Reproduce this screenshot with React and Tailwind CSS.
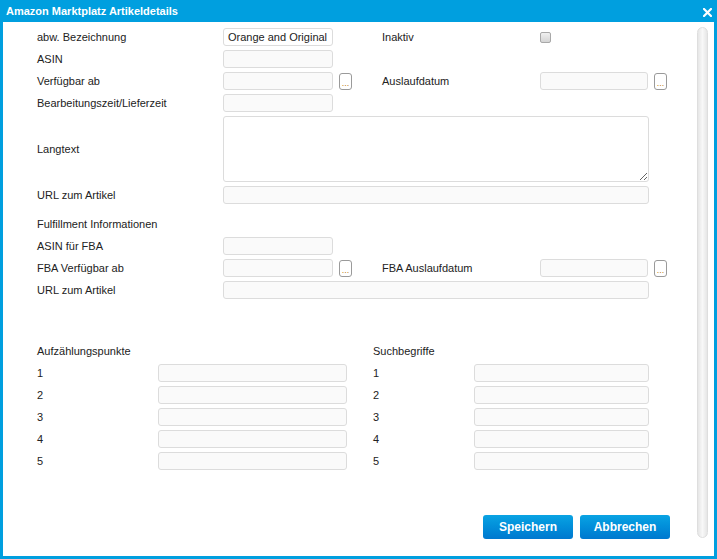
import React from 'react';

// Dialog "Amazon Marktplatz Artikeldetails": Formular mit festen Spalten.
const font = { fontFamily: '"Liberation Sans", Arial, sans-serif' };

function Field({ w, value, className = '' }) {
  return (
    <div
      className={`h-[18px] overflow-hidden whitespace-nowrap rounded-[3px] border border-[#dcdcdc] pl-[4px] text-[11px] leading-[16px] text-[#222] ${
        value ? 'bg-white' : 'bg-[#fafafa]'
      } ${className}`}
      style={{ width: w }}
    >
      {value}
    </div>
  );
}

function DotsButton() {
  return (
    <div className="ml-[6px] flex h-[17px] w-[13px] items-end justify-center rounded-[3px] border border-[#9a9a9a] bg-white pb-[1px] text-[9px] leading-[9px] text-[#c08020]">
      ...
    </div>
  );
}

function Label({ children, w }) {
  return (
    <div className="shrink-0 whitespace-nowrap text-[11px] leading-[14px] text-[#222]" style={{ width: w }}>
      {children}
    </div>
  );
}

export default function App() {
  return (
    <div className="flex h-[559px] w-full flex-col bg-[#009fdf]" style={font}>
      {/* Titelleiste */}
      <div className="flex h-[22px] shrink-0 items-center justify-between pl-[6px] pr-[5px]">
        <span className="text-[11px] font-bold text-white">Amazon Marktplatz Artikeldetails</span>
        <svg width="9" height="9" viewBox="0 0 9 9" className="mt-[2px]">
          <path d="M1 1 L8 8 M8 1 L1 8" stroke="white" strokeWidth="2.2" strokeLinecap="square" />
        </svg>
      </div>

      <div className="relative mx-[3px] mb-[3px] flex flex-1 bg-white">
        <div className="flex-1 pl-[34px] pt-[6px]">
          {/* Stammdaten */}
          <div className="flex h-[18px] items-center">
            <Label w={186}>abw. Bezeichnung</Label>
            <Field w={110} value="Orange and Original" />
            <div className="w-[49px]" />
            <Label w={158}>Inaktiv</Label>
            <div className="h-[11px] w-[11px] rounded-[2px] border border-[#a8a8a8] bg-gradient-to-b from-[#f0f0f0] to-[#d4d4d4]" />
          </div>
          <div className="mt-[4px] flex h-[18px] items-center">
            <Label w={186}>ASIN</Label>
            <Field w={110} />
          </div>
          <div className="mt-[4px] flex h-[18px] items-center">
            <Label w={186}>Verfügbar ab</Label>
            <Field w={110} />
            <DotsButton />
            <div className="w-[30px]" />
            <Label w={158}>Auslaufdatum</Label>
            <Field w={108} />
            <DotsButton />
          </div>
          <div className="mt-[4px] flex h-[18px] items-center">
            <Label w={186}>Bearbeitungszeit/Lieferzeit</Label>
            <Field w={110} />
          </div>
          <div className="mt-[4px] flex h-[66px] items-center">
            <Label w={186}>Langtext</Label>
            <textarea className="h-[66px] w-[426px] rounded-[3px] border border-[#dcdcdc] bg-white" />
          </div>
          <div className="mt-[4px] flex h-[18px] items-center">
            <Label w={186}>URL zum Artikel</Label>
            <Field w={426} />
          </div>

          {/* Fulfillment */}
          <div className="mt-[11px] flex h-[18px] items-center">
            <Label w={186}>Fulfillment Informationen</Label>
          </div>
          <div className="mt-[4px] flex h-[18px] items-center">
            <Label w={186}>ASIN für FBA</Label>
            <Field w={110} />
          </div>
          <div className="mt-[4px] flex h-[18px] items-center">
            <Label w={186}>FBA Verfügbar ab</Label>
            <Field w={110} />
            <DotsButton />
            <div className="w-[30px]" />
            <Label w={158}>FBA Auslaufdatum</Label>
            <Field w={108} />
            <DotsButton />
          </div>
          <div className="mt-[4px] flex h-[18px] items-center">
            <Label w={186}>URL zum Artikel</Label>
            <Field w={426} />
          </div>

          {/* Aufzählungspunkte / Suchbegriffe */}
          <div className="mt-[43px] flex h-[18px] items-center">
            <Label w={336}>Aufzählungspunkte</Label>
            <Label w={120}>Suchbegriffe</Label>
          </div>
          {[1, 2, 3, 4, 5].map((n) => (
            <div key={n} className="mt-[4px] flex h-[18px] items-center">
              <Label w={121}>{n}</Label>
              <Field w={189} />
              <div className="w-[26px]" />
              <Label w={101}>{n}</Label>
              <Field w={175} />
            </div>
          ))}

          <div className="ml-[446px] mt-[45px] flex gap-[7px]">
            <button className="h-[24px] w-[90px] rounded-[3px] bg-gradient-to-b from-[#0aa3e3] to-[#0078cf] text-[12px] font-bold text-white">
              Speichern
            </button>
            <button className="h-[24px] w-[90px] rounded-[3px] bg-gradient-to-b from-[#0aa3e3] to-[#0078cf] text-[12px] font-bold text-white">
              Abbrechen
            </button>
          </div>
        </div>

        {/* Scrollleiste */}
        <div className="mb-[18px] mr-[6px] mt-[5px] w-[11px] rounded-full border border-[#dedede] bg-gradient-to-r from-[#e6e6e6] via-[#f8f8f8] to-[#e6e6e6]" />
      </div>
    </div>
  );
}
